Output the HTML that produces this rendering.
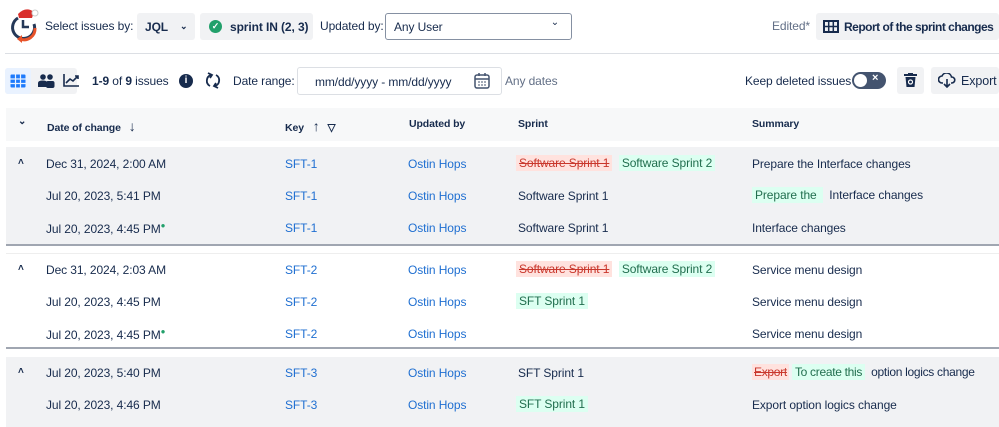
<!DOCTYPE html>
<html><head><style>
*{box-sizing:border-box;margin:0;padding:0}
body{width:999px;height:422px;overflow:hidden;background:#fff;font-family:"Liberation Sans",sans-serif;font-size:12px;letter-spacing:-0.1px;color:#172b4d;position:relative}
.a{position:absolute;white-space:nowrap}
.btn{position:absolute;background:#f1f2f4;border-radius:3px;height:27px;display:flex;align-items:center;font-weight:bold;font-size:12px;white-space:nowrap}
.btn svg{flex-shrink:0}
.grp{position:absolute;left:6px;width:993px}
.row{position:absolute;height:32px;left:0;width:100%}
.row span{position:absolute;top:9px;white-space:nowrap}
.lnk{color:#1f6fd1}
.del{background:#ffe2de;color:#c9372c;text-decoration:line-through;padding:1px 3px}
.add{background:#dcfff1;color:#216e4e;padding:1px 3px}
.hd{font-weight:bold;font-size:10.5px}
</style></head><body>
<svg class="a" style="left:8px;top:6px" width="32" height="40" viewBox="0 0 32 40">
<path d="M10 8 Q18 0 26 6 L24 12 L11 12Z" fill="#d9302c"/><circle cx="27" cy="7" r="3" fill="#fff" stroke="#ccc"/>
<path d="M10 12 A11 11 0 1 0 26 18" fill="none" stroke="#253858" stroke-width="3"/>
<path d="M15 14 V21 H21" fill="none" stroke="#253858" stroke-width="2.5"/>
<path d="M27 22 A11 11 0 0 1 12 33" fill="none" stroke="#e8532a" stroke-width="3"/><path d="M9 33 L14 29 L14 37Z" fill="#e8532a"/>
</svg>
<div class="a" style="left:45px;top:19px">Select issues by:</div>
<div class="btn" style="left:137px;top:13px;width:58px;padding-left:8px">JQL <span style="margin-left:12px;font-size:9px">&#8964;</span></div>
<div class="btn" style="left:200px;top:13px;width:113px;padding-left:9px"><span style="display:inline-block;width:13px;height:13px;border-radius:50%;background:#22a06b;color:#fff;font-size:9px;text-align:center;line-height:13px;margin-right:8px">✓</span>sprint IN (2, 3)</div>
<div class="a" style="left:320px;top:19px">Updated by:</div>
<div class="a" style="left:385px;top:13px;width:187px;height:27px;border:1px solid #8590a2;border-radius:3px;padding:6px 8px">Any User<span style="position:absolute;right:12px;top:3px;font-size:10px">&#8964;</span></div>
<div class="a" style="left:772px;top:19px;color:#626f86">Edited*</div>
<div class="btn" style="left:816px;top:13px;width:183px;padding-left:7px;letter-spacing:-0.5px"><svg width="16" height="13" viewBox="0 0 16 13" style="margin-right:5px"><rect x="1" y="1" width="14" height="11" fill="none" stroke="#172b4d" stroke-width="2"/><path d="M1 6.5H15M5.7 1V12M10.3 1V12" stroke="#172b4d" stroke-width="1.5"/></svg>Report of the sprint changes</div>
<div class="a" style="left:5px;top:53px;width:994px;height:1px;background:#dcdfe4"></div>
<div class="a" style="left:5px;top:68px;width:72px;height:26px;background:#f1f2f4;border-radius:3px"></div>
<div class="a" style="left:5px;top:68px;width:26px;height:26px;background:#e9f2ff;border-radius:3px"></div>
<svg class="a" style="left:10px;top:74px" width="16" height="14"><rect x="0.5" y="0.5" width="15" height="13" fill="#1d7afc" rx="1"/><path d="M0 5H16M0 9.5H16M5.5 0V14M10.5 0V14" stroke="#e9f2ff" stroke-width="1.2"/></svg>
<svg class="a" style="left:38px;top:73px" width="17" height="15"><circle cx="5" cy="4" r="2.8" fill="#172b4d"/><circle cx="12" cy="4" r="2.8" fill="#172b4d"/><path d="M0 14V10Q0 7.5 5 7.5Q8 7.5 9 9V14Z" fill="#172b4d"/><rect x="8" y="8" width="8.5" height="7" rx="2" fill="#172b4d"/></svg>
<svg class="a" style="left:63px;top:73px" width="17" height="14"><path d="M1 1V13H16" fill="none" stroke="#172b4d" stroke-width="1.6"/><path d="M3 10L7 6L10 8L15 3M12 3H15V6" fill="none" stroke="#172b4d" stroke-width="1.6"/></svg>
<div class="a" style="left:92px;top:74px;font-weight:bold">1-9 <span style="font-weight:normal">of</span> 9 <span style="font-weight:normal">issues</span></div>
<div class="a" style="left:179px;top:74px;width:14px;height:14px;border-radius:50%;background:#172b4d;color:#fff;font-size:10px;text-align:center;line-height:14px;font-weight:bold">i</div>
<svg class="a" style="left:205px;top:72px" width="16" height="17"><path d="M6 3A6 6 0 0 0 5 14M10 14A6 6 0 0 0 11 3" fill="none" stroke="#172b4d" stroke-width="1.8"/><path d="M3 1L7 3L5 6M13 16L9 14L11 11" fill="none" stroke="#172b4d" stroke-width="1.8"/></svg>
<div class="a" style="left:233px;top:74px">Date range:</div>
<div class="a" style="left:297px;top:67px;width:205px;height:28px;border:1px solid #dcdfe4;border-radius:3px;padding:7px 0 0 17px">mm/dd/yyyy - mm/dd/yyyy</div>
<svg class="a" style="left:474px;top:73px" width="16" height="16"><rect x="1" y="2" width="14" height="13" rx="2" fill="none" stroke="#44546f" stroke-width="1.5"/><path d="M1 6H15M5 0V3M11 0V3" stroke="#44546f" stroke-width="1.5"/><path d="M4 9h2M7 9h2M10 9h2M4 12h2M7 12h2M10 12h2" stroke="#44546f"/></svg>
<div class="a" style="left:505px;top:74px;color:#626f86">Any dates</div>
<div class="a" style="left:745px;top:74px">Keep deleted issues</div>
<div class="a" style="left:852px;top:72px;width:34px;height:17px;border-radius:9px;background:#44546f"><div style="position:absolute;left:2px;top:2px;width:13px;height:13px;border-radius:50%;background:#fff"></div><span style="position:absolute;left:20px;top:0;color:#fff;font-size:11px;font-weight:bold">×</span></div>
<div class="a" style="left:897px;top:67px;width:27px;height:27px;background:#f1f2f4;border-radius:3px"><svg style="position:absolute;left:7px;top:6px" width="13" height="15"><path d="M0 2H13M4 0H9" stroke="#172b4d" stroke-width="2"/><path d="M1.5 4H11.5L10.5 14H2.5Z" fill="#172b4d"/><circle cx="6.5" cy="9" r="2" fill="none" stroke="#fff" stroke-width="1.2"/></svg></div>
<div class="btn" style="left:931px;top:67px;width:68px;padding-left:7px;font-weight:normal;font-size:12.5px"><svg width="18" height="15" style="margin-right:5px" viewBox="0 0 18 15"><path d="M5 10H4A3.5 3.5 0 0 1 4 3 A5 5 0 0 1 13.5 4 A3 3 0 0 1 14 10H13" fill="none" stroke="#172b4d" stroke-width="1.6"/><path d="M9 6V14M6 11L9 14L12 11" fill="none" stroke="#172b4d" stroke-width="1.6"/></svg>Export</div>
<div class="a" style="left:6px;top:108px;width:993px;height:33px;background:#f7f8f9"></div>
<div class="a hd" style="left:18px;top:116px;font-size:10px">&#8964;</div>
<div class="a hd" style="left:47px;top:118px">Date of change <span style="font-size:14px;margin-left:5px">↓</span></div>
<div class="a hd" style="left:285px;top:118px">Key <span style="font-size:14px;margin-left:6px">↑</span> <span style="margin-left:5px">▽</span></div>
<div class="a hd" style="left:409px;top:118px">Updated by</div>
<div class="a hd" style="left:518px;top:118px">Sprint</div>
<div class="a hd" style="left:752px;top:118px">Summary</div>
<div class="grp" style="top:147px;height:99px;background:#f1f2f4;border-bottom:2px solid #a0a6b1">
<div class="row" style="top:1px"><span style="left:12px;font-size:10px;font-weight:bold">&#708;</span><span style="left:40px">Dec 31, 2024, 2:00 AM</span><span class="lnk" style="left:279px">SFT-1</span><span class="lnk" style="left:402px">Ostin Hops</span><span style="left:510px;top:8px"><i class="del" style="font-style:normal">Software Sprint 1</i>&nbsp; <i class="add" style="font-style:normal">Software Sprint 2</i></span><span style="left:746px">Prepare the Interface changes</span></div>
<div class="row" style="top:33px"><span style="left:40px">Jul 20, 2023, 5:41 PM</span><span class="lnk" style="left:279px">SFT-1</span><span class="lnk" style="left:402px">Ostin Hops</span><span style="left:512px">Software Sprint 1</span><span style="left:746px;top:8px"><i class="add" style="font-style:normal">Prepare the </i>&nbsp; Interface changes</span></div>
<div class="row" style="top:65px"><span style="left:40px">Jul 20, 2023, 4:45 PM<sup style="color:#22a06b;font-size:8px">●</sup></span><span class="lnk" style="left:279px">SFT-1</span><span class="lnk" style="left:402px">Ostin Hops</span><span style="left:512px">Software Sprint 1</span><span style="left:746px">Interface changes</span></div>
</div>
<div class="grp" style="top:253px;height:96px;background:#fff;border-top:1px solid #eee;border-bottom:2px solid #a0a6b1">
<div class="row" style="top:0px"><span style="left:12px;font-size:10px;font-weight:bold">&#708;</span><span style="left:40px">Dec 31, 2024, 2:03 AM</span><span class="lnk" style="left:279px">SFT-2</span><span class="lnk" style="left:402px">Ostin Hops</span><span style="left:510px;top:8px"><i class="del" style="font-style:normal">Software Sprint 1</i>&nbsp; <i class="add" style="font-style:normal">Software Sprint 2</i></span><span style="left:746px">Service menu design</span></div>
<div class="row" style="top:32px"><span style="left:40px">Jul 20, 2023, 4:45 PM</span><span class="lnk" style="left:279px">SFT-2</span><span class="lnk" style="left:402px">Ostin Hops</span><span style="left:510px;top:8px"><i class="add" style="font-style:normal">SFT Sprint 1</i></span><span style="left:746px">Service menu design</span></div>
<div class="row" style="top:64px"><span style="left:40px">Jul 20, 2023, 4:45 PM<sup style="color:#22a06b;font-size:8px">●</sup></span><span class="lnk" style="left:279px">SFT-2</span><span class="lnk" style="left:402px">Ostin Hops</span><span style="left:746px">Service menu design</span></div>
</div>
<div class="grp" style="top:357px;height:70px;background:#f1f2f4">
<div class="row" style="top:0px"><span style="left:12px;font-size:10px;font-weight:bold">&#708;</span><span style="left:40px">Jul 20, 2023, 5:40 PM</span><span class="lnk" style="left:279px">SFT-3</span><span class="lnk" style="left:402px">Ostin Hops</span><span style="left:512px">SFT Sprint 1</span><span style="left:746px;top:8px;letter-spacing:-0.3px"><i class="del" style="font-style:normal;padding:1px 2px">Export</i> <i class="add" style="font-style:normal">To create this</i>&nbsp; option logics change</span></div>
<div class="row" style="top:32px"><span style="left:40px">Jul 20, 2023, 4:46 PM</span><span class="lnk" style="left:279px">SFT-3</span><span class="lnk" style="left:402px">Ostin Hops</span><span style="left:510px;top:8px"><i class="add" style="font-style:normal">SFT Sprint 1</i></span><span style="left:746px">Export option logics change</span></div>
</div>
</body></html>
